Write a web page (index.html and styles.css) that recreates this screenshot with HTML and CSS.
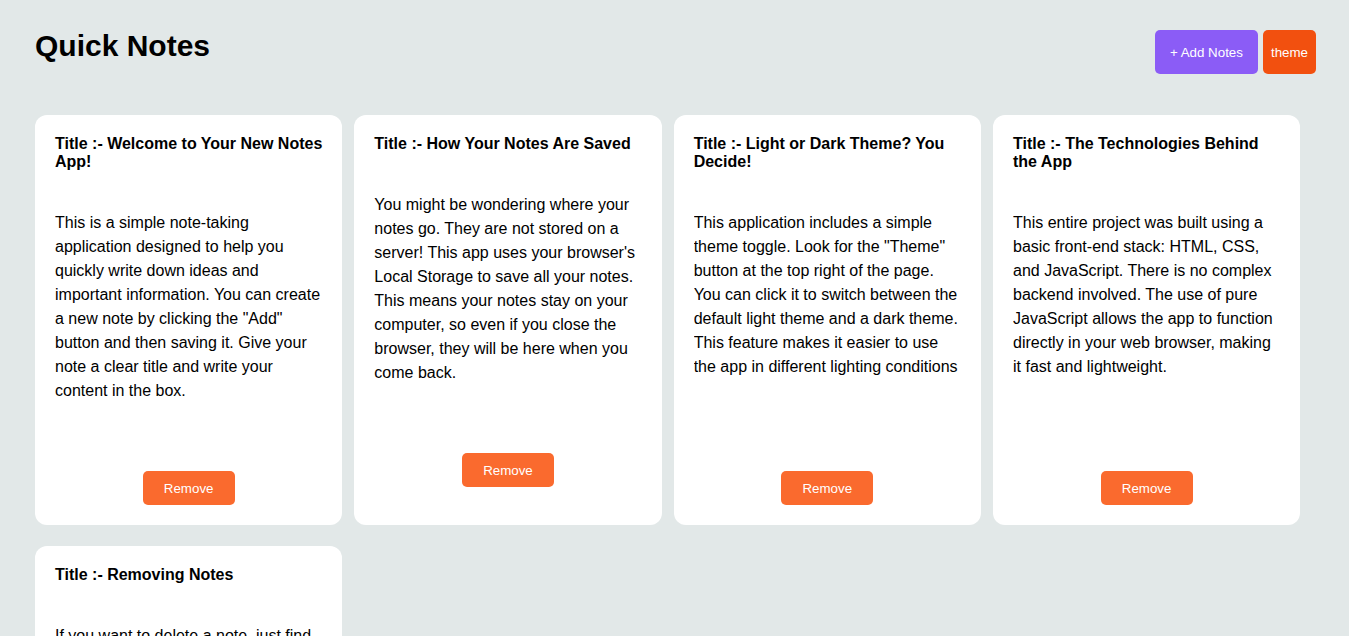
FILE: index.html
```html
<!DOCTYPE html>
<html lang="en">
<head>
<meta charset="utf-8">
<title>Quick Notes</title>
<link rel="stylesheet" href="styles.css">
</head>
<body>
<div class="page">
  <header class="header">
    <h1 class="app-title">Quick Notes</h1>
    <div class="actions">
      <button class="btn btn-add">+ Add Notes</button>
      <button class="btn btn-theme">theme</button>
    </div>
  </header>
  <main class="notes">
    <article class="note">
      <h3 class="note-title">Title :- Welcome to Your New Notes App!</h3>
      <div class="note-text">This is a simple note-taking application designed to help you quickly write down ideas and important information. You can create a new note by clicking the "Add" button and then saving it. Give your note a clear title and write your content in the box.</div>
      <button class="btn btn-remove">Remove</button>
    </article>
    <article class="note">
      <h3 class="note-title">Title :- How Your Notes Are Saved</h3>
      <div class="note-text">You might be wondering where your notes go. They are not stored on a server! This app uses your browser's Local Storage to save all your notes. This means your notes stay on your computer, so even if you close the browser, they will be here when you come back.</div>
      <button class="btn btn-remove">Remove</button>
    </article>
    <article class="note">
      <h3 class="note-title">Title :- Light or Dark Theme? You Decide!</h3>
      <div class="note-text">This application includes a simple theme toggle. Look for the "Theme" button at the top right of the page. You can click it to switch between the default light theme and a dark theme. This feature makes it easier to use the app in different lighting conditions</div>
      <button class="btn btn-remove">Remove</button>
    </article>
    <article class="note">
      <h3 class="note-title">Title :- The Technologies Behind the App</h3>
      <div class="note-text">This entire project was built using a basic front-end stack: HTML, CSS, and JavaScript. There is no complex backend involved. The use of pure JavaScript allows the app to function directly in your web browser, making it fast and lightweight.</div>
      <button class="btn btn-remove">Remove</button>
    </article>
    <article class="note">
      <h3 class="note-title">Title :- Removing Notes</h3>
      <div class="note-text">If you want to delete a note, just find the note you no longer need and click the "Remove" button at the bottom of it. The note will be deleted right away and removed from your browser's storage.</div>
      <button class="btn btn-remove">Remove</button>
    </article>
  </main>
</div>
</body>
</html>
```
FILE: styles.css
```css
* {
  box-sizing: border-box;
}

html, body {
  margin: 0;
  padding: 0;
}

body {
  background: #e2e8e8;
  font-family: "Liberation Sans", Arial, sans-serif;
  color: #000;
}

.page {
  padding: 30px 33px 40px 35px;
}

.header {
  display: flex;
  justify-content: space-between;
  align-items: flex-start;
}

.app-title {
  margin: 0;
  font-size: 30px;
  line-height: 32px;
  font-weight: bold;
}

.actions {
  display: flex;
  gap: 5px;
}

.btn {
  font-family: "Liberation Sans", Arial, sans-serif;
  font-size: 13.33px;
  color: #fff;
  border: none;
  cursor: pointer;
}

.btn-add {
  height: 44px;
  padding: 0 15px;
  background: #8b5cf6;
  border-radius: 5px;
}

.btn-theme {
  height: 44px;
  padding: 0 8px;
  background: #f2500f;
  border-radius: 5px;
}

.notes {
  margin-top: 41px;
  display: grid;
  grid-template-columns: repeat(4, 307.33px);
  column-gap: 12px;
  row-gap: 21px;
}

.note {
  background: #fff;
  border-radius: 12px;
  padding: 20px;
  display: flex;
  flex-direction: column;
  align-items: center;
}

.note-title {
  align-self: stretch;
  margin: 0 0 40px;
  font-size: 16px;
  line-height: 18px;
  font-weight: bold;
}

.note-text {
  align-self: stretch;
  font-size: 16px;
  line-height: 24px;
  height: 216px;
  overflow: hidden;
}

.btn-remove {
  width: 92px;
  margin-top: 44px;
  padding: 10px 0 8px;
  line-height: 16px;
  background: #fa6a2e;
  border-radius: 5px;
}
```
